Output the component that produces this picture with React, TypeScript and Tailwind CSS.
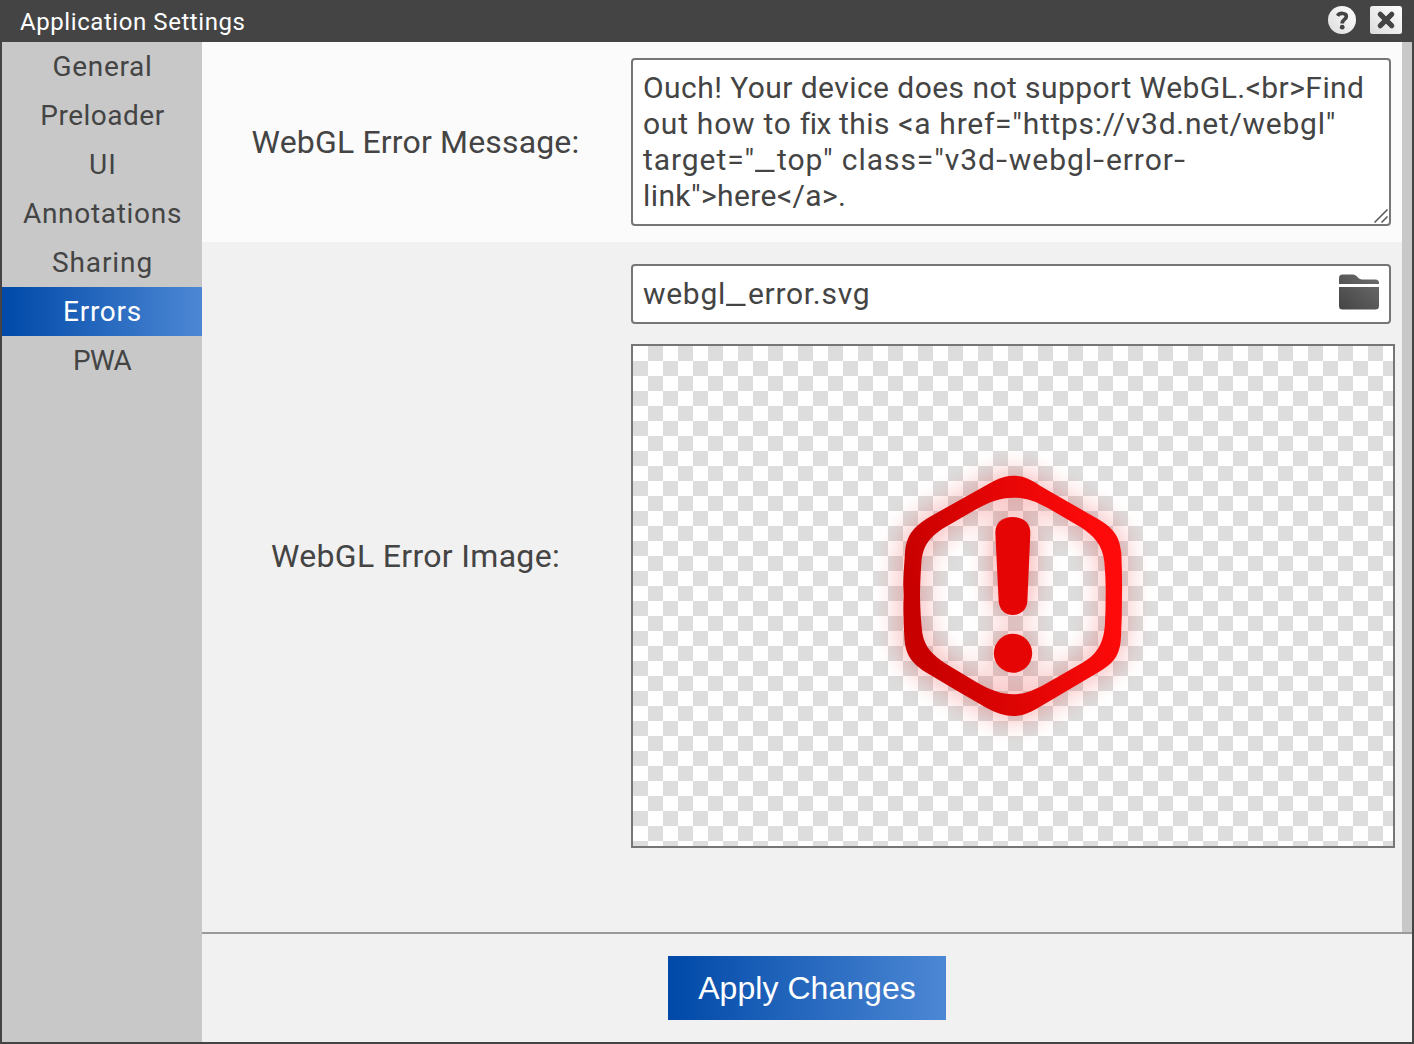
import React from 'react';

const tabs = [
  { name: 'General', spacing: 'pl-[1px] tracking-[0.7px]' },
  { name: 'Preloader', spacing: 'pl-[1px] tracking-[0.5px]' },
  { name: 'UI', spacing: 'pl-[2px] tracking-[1.2px]' },
  { name: 'Annotations', spacing: 'pl-[1px] tracking-[0.7px]' },
  { name: 'Sharing', spacing: 'pl-[1px] tracking-[0.9px]' },
  { name: 'Errors', spacing: 'pl-[1px] tracking-[0.75px]' },
  { name: 'PWA', spacing: 'tracking-[-0.7px]' },
];

function Underscore() {
  return <span className="inline-block w-[22px] origin-left scale-x-[1.45]">_</span>;
}

function Hyphen() {
  return <span className="inline-block w-[13px] origin-left scale-x-[1.35]">-</span>;
}

function HelpIcon() {
  return (
    <svg className="h-7 w-7" viewBox="0 0 28 28">
      <defs>
        <linearGradient id="help" x1="0" y1="1" x2="1" y2="0">
          <stop offset="0" stopColor="#dcdcdc" />
          <stop offset="1" stopColor="#ffffff" />
        </linearGradient>
      </defs>
      <circle cx="14" cy="14" r="14" fill="url(#help)" />
      <path d="M9.6 9.8C11.4 6.6 18.3 6.6 18.3 10.4C18.3 13.6 14.2 13.2 14.2 17.4" fill="none" stroke="#444" strokeWidth="3.7" />
      <circle cx="14.2" cy="21.2" r="2.4" fill="#444" />
    </svg>
  );
}

function CloseIcon() {
  return (
    <svg className="h-7 w-8" viewBox="0 0 32 28">
      <defs>
        <linearGradient id="close" x1="0" y1="1" x2="1" y2="0">
          <stop offset="0" stopColor="#dcdcdc" />
          <stop offset="1" stopColor="#ffffff" />
        </linearGradient>
      </defs>
      <rect width="32" height="28" rx="2.5" fill="url(#close)" />
      <path d="M10 8L22 20M22 8L10 20" stroke="#444" strokeWidth="4.6" strokeLinejoin="round" />
      <path d="M10.2 8.2L21.8 19.8M21.8 8.2L10.2 19.8" stroke="#444" strokeWidth="5" strokeLinecap="round" />
    </svg>
  );
}

function FolderIcon() {
  return (
    <svg className="h-9 w-10" viewBox="0 0 40 36">
      <defs>
        <linearGradient id="folder" x1="0" y1="1" x2="1" y2="0">
          <stop offset="0" stopColor="#444444" />
          <stop offset="1" stopColor="#6e6e6e" />
        </linearGradient>
      </defs>
      <path
        d="M0 10V4Q0 0.4 3.6 0.4H14Q16 0.4 17.5 2L20 4.6Q21 5.4 22.5 5.4H36.4Q40 5.4 40 9V10ZM0 13H40V32Q40 35.6 36.4 35.6H3.6Q0 35.6 0 32Z"
        fill="url(#folder)"
      />
    </svg>
  );
}

function ErrorImage() {
  return (
    <svg className="h-[290px] w-[266px] overflow-visible" viewBox="0 0 798 870">
      <defs>
        <linearGradient id="danger" gradientUnits="userSpaceOnUse" x1="110" y1="500" x2="690" y2="380">
          <stop offset="0" stopColor="#c80000" />
          <stop offset="1" stopColor="#ff0a0a" />
        </linearGradient>
        <filter id="glow" filterUnits="userSpaceOnUse" x="-200" y="-200" width="1198" height="1270" colorInterpolationFilters="sRGB">
          <feGaussianBlur stdDeviation="45" />
        </filter>
        <path
          id="ring"
          fillRule="evenodd"
          d="M400 77C370 77 345 90 320 105L150 200C95 232 78 262 75 310Q69 390 70 410L71 437Q69 500 73 560C76 610 90 635 135 665C200 705 260 738 320 774C350 790 375 798 400 798C430 798 455 785 480 770L650 670C700 640 720 620 723 560Q726 500 726 437Q727 380 724 310C718 255 700 235 650 205L480 107C455 90 430 77 400 77ZM400 143C360 143 330 155 290 177L190 235C145 265 128 290 124 340Q120 400 120 437Q121 500 127 550C135 595 160 615 195 640L290 697C335 722 365 733 400 733C435 733 460 722 500 700L610 637C655 610 672 575 675 520Q677 480 677 437Q678 390 673 335C668 285 640 255 600 230L505 175C465 153 440 143 400 143Z"
        />
        <g id="mark">
          <path d="M346 248C346 220 365 201 398 201C431 201 451 220 451 248L442 454C440 480 422 495 398 495C375 495 358 480 356 454Z" />
          <ellipse cx="399" cy="610" rx="57.5" ry="58.5" />
        </g>
      </defs>
      <g fill="#e60505" opacity="0.42" filter="url(#glow)">
        <use href="#ring" />
        <use href="#mark" />
      </g>
      <use href="#ring" fill="url(#danger)" />
      <use href="#mark" fill="#e60505" />
    </svg>
  );
}

export default function App() {
  return (
    <div className="flex h-[1044px] w-[1414px] flex-col border-2 border-t-0 border-[#444] bg-[#f1f1f1] font-['Roboto',sans-serif] text-[#444]">
      <header className="flex h-[42px] shrink-0 items-center justify-between bg-[#444] pr-2.5 pl-[18px]">
        <h1 className="pt-0.5 text-2xl leading-[42px] tracking-[0.57px] text-white">Application Settings</h1>
        <div className="flex items-center gap-3.5 pb-0.5">
          <HelpIcon />
          <CloseIcon />
        </div>
      </header>

      <div className="flex min-h-0 flex-1">
        <nav className="flex w-[200px] shrink-0 flex-col bg-[#c8c8c8]">
          {tabs.map(({ name, spacing }) => (
            <button
              key={name}
              className={`h-[49px] text-center text-[28px] leading-[49px] ${spacing} ${
                name === 'Errors' ? 'bg-[linear-gradient(90deg,#0049a8,#4c87d4)] text-white' : ''
              }`}
            >
              {name}
            </button>
          ))}
        </nav>

        <main className="flex flex-1 flex-col">
          <div className="flex h-[890px] shrink-0">
            <div className="flex flex-1 flex-col">
              <section className="flex h-[200px] items-center bg-[#fbfbfb]">
                <div className="w-[429px] pr-0.5 text-center text-[32px] tracking-[0.17px]">WebGL Error Message:</div>
                <div className="relative h-[168px] w-[760px] rounded-[4px] border-2 border-[#767676] bg-white px-2.5 pt-2.5 text-[30px] leading-9 whitespace-nowrap">
                  <div className="tracking-[0.44px]">Ouch! Your device does not support WebGL.&lt;br&gt;Find</div>
                  <div className="tracking-[0.74px]">
                    out how to <span className="tracking-[-0.5px]">fix</span> <span className="tracking-[0.45px]">this</span>{' '}
                    &lt;a href="https://v3d.net/webgl"
                  </div>
                  <div className="tracking-[0.93px]">
                    target="<Underscore />top" class="v3d<Hyphen />webgl<Hyphen />error<Hyphen />
                  </div>
                  <div className="tracking-[0.4px]">link"&gt;here&lt;/a&gt;.</div>
                  <svg className="absolute right-[1px] bottom-[1px] h-3.5 w-3.5" viewBox="0 0 14 14">
                    <path d="M0.5 13.5L13.5 0.5M7.5 13.5L13.5 7.5" stroke="#555" strokeWidth="1.5" />
                  </svg>
                </div>
              </section>

              <section className="flex h-[628px] items-center">
                <div className="w-[429px] pr-0.5 text-center text-[32px] tracking-[0.32px]">WebGL Error Image:</div>
                <div className="flex flex-col gap-5">
                  <div className="flex h-[60px] w-[760px] items-center justify-between rounded-[4px] border-2 border-[#767676] bg-white px-2.5">
                    <span className="text-[30px] leading-9 tracking-[0.7px]">
                      webgl<Underscore />error.svg
                    </span>
                    <div className="pb-1">
                      <FolderIcon />
                    </div>
                  </div>
                  <div className="flex h-[504px] w-[764px] items-center justify-center border-2 border-[#767676] bg-[conic-gradient(#ddd_25%,#fff_0_50%,#ddd_0_75%,#fff_0)] bg-[length:30px_30px] pb-[2px]">
                    <ErrorImage />
                  </div>
                </div>
              </section>
            </div>
            <div className="w-2.5 bg-[#c8c8c8]" />
          </div>
          <footer className="flex flex-1 items-center justify-center border-t-2 border-[#9a9a9a]">
            <button className="h-16 w-[278px] bg-[linear-gradient(90deg,#0049a8,#4c87d4)] font-['Liberation_Sans',sans-serif] text-[32px] tracking-[0.04px] text-white">
              Apply Changes
            </button>
          </footer>
        </main>
      </div>
    </div>
  );
}
